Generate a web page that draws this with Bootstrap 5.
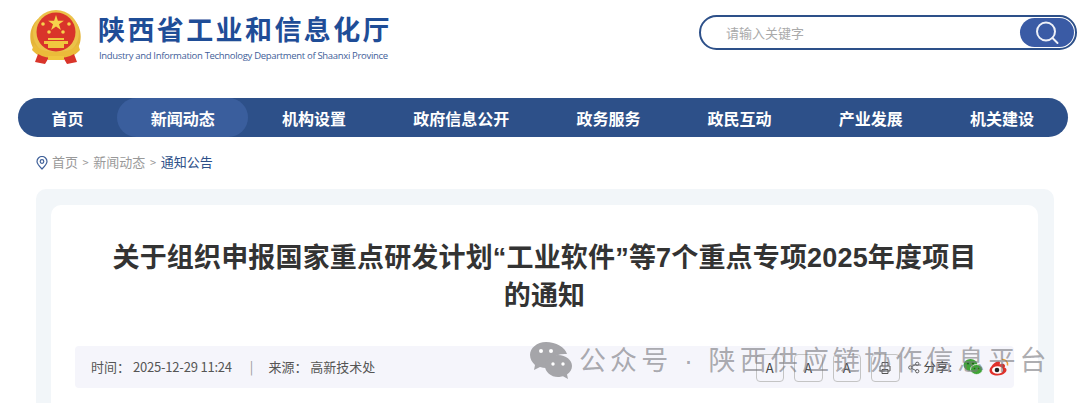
<!DOCTYPE html>
<html lang="zh-CN">
<head>
  <meta charset="UTF-8">
  <meta name="viewport" content="width=device-width, initial-scale=1.0">
  <title>陕西省工业和信息化厅</title>
  <link href="https://cdn.jsdelivr.net/npm/bootstrap@5.3.2/dist/css/bootstrap.min.css" rel="stylesheet">
  <style>
    html, body { height: 403px; overflow: hidden; }
    body { position: relative; background: #fff; font-family: "Liberation Sans", "Noto Sans CJK SC", sans-serif; }
    .site-head { height: 98px; padding: 10px 3px 0 30px; }
    .emblem { width: 52px; height: 54px; margin-right: 16px; }
    .site-name { font-family: "Noto Sans CJK SC", sans-serif; font-size: 27px; font-weight: 700; line-height: 32px; letter-spacing: 2.4px; color: #1f4d97; margin-top: 3px; }
    .site-en { font-family: "Open Sans", sans-serif; font-size: 9.5px; line-height: 12px; letter-spacing: -.32px; color: #3f6099; margin-top: 5px; margin-left: 1px; white-space: nowrap; }
    .search-box { width: 378px; height: 35px; margin-top: 5px; border: 2px solid #2d5089; border-radius: 18px; padding: 1px 1px 1px 23px; }
    .search-box input { border: 0; outline: 0; font-size: 13px; min-width: 0; background: transparent; font-family: "Noto Sans CJK SC", sans-serif; }
    .search-box input::placeholder { color: #aaa; }
    .search-btn { width: 54px; height: 29px; border: 0; border-radius: 15px; background: #3a5ba5; padding: 0; }
    .main-nav { margin: 0 12px 0 18px; height: 39px; background: #2d5089; border-radius: 20px; font-family: "Noto Sans CJK SC", sans-serif; }
    .main-nav .nav-link { padding: 0 33.6px; line-height: 40px; height: 39px; font-size: 16px; font-weight: 700; color: #fff; border-radius: 20px; white-space: nowrap; }
    .main-nav .nav-link.active { background: #3a5e9d; }
    .crumbs { height: 52px; padding: 15px 0 0 36px; font-size: 13px; line-height: 20px; color: #999; font-family: "Noto Sans CJK SC", sans-serif; }
    .crumbs .sep { margin: 0 4.6px; font-size: 11px; }
    .crumbs .here { color: #2d5089; }
    .crumbs svg { margin-right: 4px; }
    .panel-wrap { margin: 0 26px 0 36px; background: #f2f6f9; border-radius: 10px; padding: 16px 16px 0 15px; }
    .paper { background: #fff; border-radius: 10px; padding: 34px 24px 40px; height: 300px; }
    .doc-title { font-family: "Liberation Sans", "Noto Sans CJK SC", sans-serif; font-size: 27px; font-weight: 700; line-height: 38px; letter-spacing: .17px; color: #333; text-align: center; margin: 0 0 31px; padding: 0 30px; }
    .meta-bar { height: 42px; background: #f5f5fb; border-radius: 4px; padding: 0 5px 0 16px; font-size: 13px; color: #555; font-family: "Noto Sans CJK SC", sans-serif; }
    .meta-bar .meta-date { letter-spacing: -.2px; }
    .meta-bar .bar-sep { margin: 0 15px 0 18px; color: #999; }
    .tool-box { width: 28.5px; height: 28px; margin-top: 2px; border: 1px solid #c4c4c4; border-radius: 4px; font-size: 13px; color: #444; margin-right: 10px; }
    .share-icon { margin: 0 4px 0 -2px; }
    .share-text { font-size: 12.5px; color: #444; margin-right: 11px; white-space: nowrap; }
    .wb-icon { margin-left: 6px; }
    .watermark { position: absolute; left: 529px; top: 339px; color: rgba(120, 120, 125, .62); font-family: "Liberation Sans", "Noto Sans CJK SC", sans-serif; font-size: 27px; line-height: 40px; letter-spacing: 4.1px; white-space: nowrap; }
    .watermark svg { margin-right: 7px; }
    .watermark span { margin-top: 2px; }
  </style>
</head>
<body>
  <header class="site-head d-flex justify-content-between align-items-start">
    <div class="d-flex align-items-start">
      <svg class="emblem" viewBox="0 0 52 54">
        <path d="M8 9C2 14-.5 22 .5 30c.7 6 4 11 8 14h34c4-3 7.300-8 8-14 1-8-1.500-16-7.500-21z" fill="#e5b53a"/>
        <circle cx="26" cy="23" r="23" fill="#ecc24a"/>
        <circle cx="26" cy="22" r="19.500" fill="#d9342a"/>
        <path d="M26 5l1.900 5.700h6l-4.900 3.500 1.900 5.700-4.900-3.500-4.900 3.500 1.900-5.700-4.900-3.500h6z" fill="#f6d24c"/>
        <circle cx="13" cy="14" r="1.800" fill="#f6d24c"/><circle cx="39" cy="14" r="1.800" fill="#f6d24c"/>
        <circle cx="19" cy="22" r="1.800" fill="#f6d24c"/><circle cx="33" cy="22" r="1.800" fill="#f6d24c"/>
        <path d="M18 28h16v2H18zM14 31h24v3H14zM18 34h16v4H18z" fill="#f0c63f"/>
        <path d="M4 34c5 6 13 8 22 8s17-2 22-8l2 6c-5 6-13 9-24 9S7 46 2 40z" fill="#ebbb3a"/>
        <path d="M8 44l-3 8 10 2 3-5h16l3 5 10-2-3-8c-5 3-11 4-18 4s-13-1-18-4z" fill="#d9342a"/>
        <path d="M18 46h16v4H18z" fill="#f0c63f"/>
      </svg>
      <div>
        <div class="site-name">陕西省工业和信息化厅</div>
        <div class="site-en">Industry and Information Technology Department of Shaanxi Province</div>
      </div>
    </div>
    <form class="search-box d-flex align-items-center" onsubmit="event.preventDefault();">
      <input class="flex-grow-1" type="text" placeholder="请输入关键字">
      <button class="search-btn d-flex align-items-center justify-content-center" type="submit" aria-label="搜索">
        <svg width="26" height="26" viewBox="0 0 26 26" fill="none" stroke="#eef1f8" stroke-width="2"><circle cx="12" cy="11.500" r="9"/><path d="M18.500 18l5 5" stroke-linecap="round"/></svg>
      </button>
    </form>
  </header>

  <nav class="main-nav nav flex-nowrap">
    <a class="nav-link" href="#">首页</a>
    <a class="nav-link active" href="#">新闻动态</a>
    <a class="nav-link" href="#">机构设置</a>
    <a class="nav-link" href="#">政府信息公开</a>
    <a class="nav-link" href="#">政务服务</a>
    <a class="nav-link" href="#">政民互动</a>
    <a class="nav-link" href="#">产业发展</a>
    <a class="nav-link" href="#">机关建设</a>
  </nav>

  <div class="crumbs d-flex align-items-start">
    <svg class="mt-1" width="12" height="14" viewBox="0 0 12 14" fill="none" stroke="#3f6099" stroke-width="1.200"><path d="M6 13C3 10 1 8 1 5.500a5 5 0 0 1 10 0C11 8 9 10 6 13z"/><circle cx="6" cy="5.500" r="1.800"/></svg>
    <span>首页</span><span class="sep">&gt;</span><span>新闻动态</span><span class="sep">&gt;</span><span class="here">通知公告</span>
  </div>

  <div class="panel-wrap">
    <div class="paper">
      <h1 class="doc-title">关于组织申报国家重点研发计划“工业软件”等7个重点专项2025年度项目的通知</h1>
      <div class="meta-bar d-flex align-items-center justify-content-between">
        <div class="d-flex align-items-center">
          <span>时间：&nbsp;<span class="meta-date">2025-12-29 11:24</span></span><span class="bar-sep">|</span><span>来源：&nbsp;高新技术处</span>
        </div>
        <div class="d-flex align-items-center">
          <span class="tool-box d-flex align-items-center justify-content-center">A</span>
          <span class="tool-box d-flex align-items-center justify-content-center">A</span>
          <span class="tool-box d-flex align-items-center justify-content-center">A</span>
          <span class="tool-box d-flex align-items-center justify-content-center">
            <svg width="14" height="14" viewBox="0 0 14 14" fill="none" stroke="#555"><path d="M4 5V1.500h6V5M2 5h10v5H2zM4 8.500h6v4H4z"/></svg>
          </span>
          <svg class="share-icon" width="12" height="13" viewBox="0 0 13 13" fill="none" stroke="#555"><circle cx="2.500" cy="6.500" r="1.800"/><circle cx="10" cy="2.500" r="1.800"/><circle cx="10" cy="10.500" r="1.800"/><path d="M4 5.500l4.500-2.300M4 7.500l4.500 2.300"/></svg>
          <span class="share-text">分享:</span>
          <svg width="20" height="18" viewBox="0 0 20 18"><ellipse cx="7.500" cy="7" rx="7" ry="6" fill="#3fa535"/><ellipse cx="13.500" cy="11.500" rx="6" ry="5" fill="#3fa535" stroke="#f5f5fb" stroke-width=".8"/><circle cx="5" cy="5.500" r="1" fill="#1d5c18"/><circle cx="10" cy="5.500" r="1" fill="#1d5c18"/><circle cx="11.500" cy="10.500" r=".8" fill="#1d5c18"/><circle cx="15.500" cy="10.500" r=".8" fill="#1d5c18"/></svg>
          <svg class="wb-icon" width="20" height="18" viewBox="0 0 20 18"><path d="M2 9c2-4 6-6 8-5.500 1.500.5 1 2 .5 3 2-1 5-1 5.500 1 .3 1-.5 1.500-.5 2 1.500.5 2 1.500 2 2.500 0 2.500-4 5.500-9 5.500-4.500 0-8-2-8-5 0-1 .5-2.500 1.500-3.500z" fill="#e0312b"/><ellipse cx="8.500" cy="12" rx="5.500" ry="3.800" fill="#fff"/><circle cx="8" cy="12" r="2.300" fill="#222"/><path d="M13 1.500a5 5 0 0 1 5.500 6" fill="none" stroke="#eda23a" stroke-width="1.500"/></svg>
        </div>
      </div>
    </div>
  </div>

  <div class="watermark d-flex align-items-center">
    <svg width="43" height="38" viewBox="0 0 43 38" fill="#a5a5a9"><path d="M17 1C8 1 1 7 1 14c0 4 2 7 5 10l-1 5 6-3c2 .6 4 1 6 1h2c-1-7 6-15 19-14C36 6 27 1 17 1z"/><path d="M29 14c-7 0-13 5-13 11s6 11 13 11c2 0 3-.3 5-.8l5 2.800-1-4.500c3-2 5-5 5-8.500 0-6-6-11-14-11z"/><g fill="#fff"><circle cx="12" cy="10" r="2"/><circle cx="22" cy="10" r="2"/><circle cx="24" cy="23" r="1.700"/><circle cx="34" cy="23" r="1.700"/></g></svg>
    <span>公众号 · 陕西供应链协作信息平台</span>
  </div>
  <script src="https://cdn.jsdelivr.net/npm/bootstrap@5.3.2/dist/js/bootstrap.bundle.min.js"></script>
</body>
</html>
